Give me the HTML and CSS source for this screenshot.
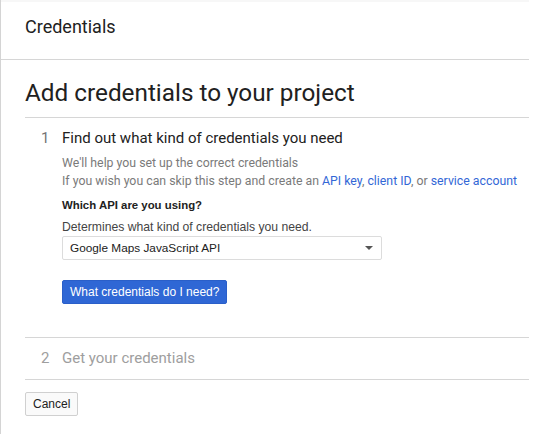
FILE: index.html
```html
<!DOCTYPE html>
<html>
<head>
<meta charset="utf-8">
<link rel="stylesheet" href="styles.css">
</head>
<body>
<div class="page">
  <header class="topbar">
    <div class="topbar-title">Credentials</div>
  </header>
  <main class="main">
    <h1 class="heading">Add credentials to your project</h1>
    <section class="step step-active">
      <div class="step-head">
        <span class="step-num">1</span>
        <span class="step-title">Find out what kind of credentials you need</span>
      </div>
      <div class="step-body">
        <p class="desc">We'll help you set up the correct credentials<br>If you wish you can skip this step and create an <a class="link">API key</a>, <a class="link">client ID</a>, or <a class="link">service account</a></p>
        <div class="field-label">Which API are you using?</div>
        <div class="field-hint">Determines what kind of credentials you need.</div>
        <div class="select">
          <span class="select-text">Google Maps JavaScript API</span>
          <span class="caret"></span>
        </div>
        <button class="primary-btn">What credentials do I need?</button>
      </div>
    </section>
    <section class="step step-inactive">
      <div class="step-head">
        <span class="step-num">2</span>
        <span class="step-title">Get your credentials</span>
      </div>
    </section>
    <button class="secondary-btn">Cancel</button>
  </main>
</div>
</body>
</html>
```
FILE: styles.css
```css
html, body {
  margin: 0;
  padding: 0;
  background: #fff;
}
.page {
  width: 529px;
  min-height: 434px;
  border-left: 1px solid #d4d4d4;
  box-sizing: border-box;
  font-family: Roboto, "Liberation Sans", Arial, sans-serif;
  color: #212121;
}
.topbar {
  height: 60px;
  box-sizing: border-box;
  border-top: 2px solid #f7f7f7;
  border-bottom: 1px solid #d6d6d6;
  padding: 13px 0 0 24px;
}
.topbar-title {
  font-size: 18px;
  line-height: 24px;
  color: #212121;
}
.main {
  padding-left: 24px;
}
.heading {
  margin: 17px 0 0 0;
  font-size: 24.3px;
  line-height: 32px;
  font-weight: 400;
  color: #212121;
  padding-bottom: 8px;
  border-bottom: 1px solid #d6d6d6;
}
.step {
  border-bottom: 1px solid #d6d6d6;
}
.step-active {
  padding: 10px 0 33px 0;
}
.step-inactive {
  padding: 10px 0 11px 0;
}
.step-head {
  display: flex;
  font-size: 15px;
  line-height: 20px;
}
.step-num {
  width: 21px;
  padding-left: 16px;
  color: #757575;
}
.step-title {
  color: #212121;
}
.step-inactive .step-num,
.step-inactive .step-title {
  color: #9e9e9e;
}
.step-body {
  padding-left: 37px;
  padding-top: 6px;
}
.desc {
  margin: 0;
  font-size: 12.3px;
  line-height: 18px;
  color: #7a7a7a;
}
.link {
  color: #3367d6;
  text-decoration: none;
}
.field-label {
  margin-top: 6px;
  font-family: "Liberation Sans", Arial, sans-serif;
  font-weight: 700;
  font-size: 11.4px;
  line-height: 18px;
  color: #212121;
}
.field-hint {
  margin-top: 4px;
  font-family: "Liberation Sans", Arial, sans-serif;
  font-size: 12.2px;
  line-height: 18px;
  color: #444;
}
.select {
  margin-top: 0;
  width: 320px;
  height: 24px;
  box-sizing: border-box;
  border: 1px solid #dcdcdc;
  border-radius: 2px;
  display: flex;
  align-items: center;
  justify-content: space-between;
  padding: 0 8px 0 7px;
  font-family: "Liberation Sans", Arial, sans-serif;
  font-size: 11.8px;
  color: #212121;
}
.caret {
  width: 0;
  height: 0;
  border-left: 4px solid transparent;
  border-right: 4px solid transparent;
  border-top: 4px solid #555;
}
.primary-btn {
  display: block;
  margin-top: 20px;
  height: 24px;
  padding: 0 7px;
  background: #2f67d5;
  border: 1px solid #2a5fc9;
  border-radius: 2px;
  color: #fff;
  font-family: "Liberation Sans", Arial, sans-serif;
  font-size: 12px;
  line-height: 22px;
}
.secondary-btn {
  display: block;
  margin-top: 12px;
  height: 24px;
  padding: 0 7px;
  background: #fafafa;
  border: 1px solid #d0d0d0;
  border-radius: 2px;
  color: #212121;
  font-family: "Liberation Sans", Arial, sans-serif;
  font-size: 12px;
  line-height: 22px;
}
```
